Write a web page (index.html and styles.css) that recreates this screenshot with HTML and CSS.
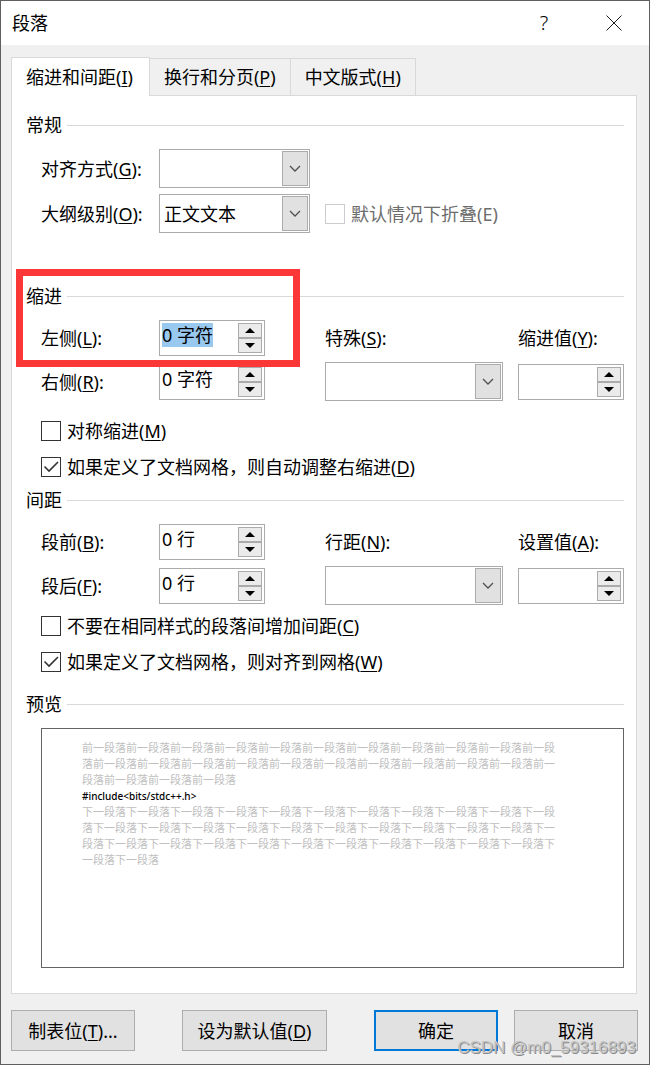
FILE: index.html
```html
<!DOCTYPE html>
<html lang="zh-CN">
<head>
    <meta charset="UTF-8">
    <meta name="viewport" content="width=device-width, initial-scale=1.0">
    <title>段落</title>
    <link rel="stylesheet" href="styles.css">
</head>
<body>
    <svg class="defs" width="0" height="0">
        <symbol id="chevron" viewBox="0 0 12 8"><path d="M1 1l5 5 5-5" fill="none" stroke="#505050" stroke-width="1.3"/></symbol>
        <symbol id="up" viewBox="0 0 10 5"><path d="M5 0l5 5H0z"/></symbol>
        <symbol id="down" viewBox="0 0 10 5"><path d="M0 0h10L5 5z"/></symbol>
        <symbol id="check" viewBox="0 0 20 20"><path d="M3.5 9.5l4.5 4.5L17 5" fill="none" stroke="#333" stroke-width="1.6"/></symbol>
    </svg>

    <div class="dialog">
        <header class="titlebar">
            <h1>段落</h1>
            <button type="button" class="title-btn help" aria-label="帮助">?</button>
            <button type="button" class="title-btn" aria-label="关闭">
                <svg width="16" height="16" viewBox="0 0 16 16"><path d="M.5.5l15 15M15.5.5l-15 15" fill="none" stroke="#000" stroke-width=".9"/></svg>
            </button>
        </header>

        <nav class="tabs">
            <button type="button" class="tab active">缩进和间距(<u>I</u>)</button>
            <button type="button" class="tab">换行和分页(<u>P</u>)</button>
            <button type="button" class="tab">中文版式(<u>H</u>)</button>
        </nav>

        <main class="pane">
            <section class="general">
                <h2>常规</h2>
                <div class="fields">
                    <label for="align">对齐方式(<u>G</u>):</label>
                    <div class="combo">
                        <select id="align"><option></option></select>
                        <span class="combo-arrow"><svg width="12" height="8"><use href="#chevron"/></svg></span>
                    </div>
                    <label for="outline" class="new-row">大纲级别(<u>O</u>):</label>
                    <div class="combo">
                        <select id="outline"><option>正文文本</option></select>
                        <span class="combo-arrow"><svg width="12" height="8"><use href="#chevron"/></svg></span>
                    </div>
                    <label class="check disabled">
                        <span class="box"><input type="checkbox" disabled></span>
                        <span>默认情况下折叠(E)</span>
                    </label>
                </div>
            </section>

            <section class="indent">
                <h2>缩进</h2>
                <div class="fields">
                    <label for="left">左侧(<u>L</u>):</label>
                    <div class="spin">
                        <input type="text" id="left" value="0 字符">
                        <div class="spin-btns">
                            <button type="button" aria-label="增加"><svg width="10" height="5"><use href="#up"/></svg></button>
                            <button type="button" aria-label="减少"><svg width="10" height="5"><use href="#down"/></svg></button>
                        </div>
                    </div>
                    <label for="special">特殊(<u>S</u>):</label>
                    <label for="by">缩进值(<u>Y</u>):</label>

                    <label for="right">右侧(<u>R</u>):</label>
                    <div class="spin">
                        <input type="text" id="right" value="0 字符">
                        <div class="spin-btns">
                            <button type="button" aria-label="增加"><svg width="10" height="5"><use href="#up"/></svg></button>
                            <button type="button" aria-label="减少"><svg width="10" height="5"><use href="#down"/></svg></button>
                        </div>
                    </div>
                    <div class="combo wide">
                        <select id="special"><option></option></select>
                        <span class="combo-arrow"><svg width="12" height="8"><use href="#chevron"/></svg></span>
                    </div>
                    <div class="spin">
                        <input type="text" id="by">
                        <div class="spin-btns">
                            <button type="button" aria-label="增加"><svg width="10" height="5"><use href="#up"/></svg></button>
                            <button type="button" aria-label="减少"><svg width="10" height="5"><use href="#down"/></svg></button>
                        </div>
                    </div>
                </div>
                <div class="checks">
                    <label class="check">
                        <span class="box"><input type="checkbox"><svg><use href="#check"/></svg></span>
                        <span>对称缩进(<u>M</u>)</span>
                    </label>
                    <label class="check">
                        <span class="box"><input type="checkbox" checked><svg><use href="#check"/></svg></span>
                        <span>如果定义了文档网格，则自动调整右缩进(<u>D</u>)</span>
                    </label>
                </div>
                <div class="highlight"></div>
            </section>

            <section class="spacing">
                <h2>间距</h2>
                <div class="fields">
                    <label for="before">段前(<u>B</u>):</label>
                    <div class="spin">
                        <input type="text" id="before" value="0 行">
                        <div class="spin-btns">
                            <button type="button" aria-label="增加"><svg width="10" height="5"><use href="#up"/></svg></button>
                            <button type="button" aria-label="减少"><svg width="10" height="5"><use href="#down"/></svg></button>
                        </div>
                    </div>
                    <label for="line">行距(<u>N</u>):</label>
                    <label for="at">设置值(<u>A</u>):</label>

                    <label for="after">段后(<u>F</u>):</label>
                    <div class="spin">
                        <input type="text" id="after" value="0 行">
                        <div class="spin-btns">
                            <button type="button" aria-label="增加"><svg width="10" height="5"><use href="#up"/></svg></button>
                            <button type="button" aria-label="减少"><svg width="10" height="5"><use href="#down"/></svg></button>
                        </div>
                    </div>
                    <div class="combo wide">
                        <select id="line"><option></option></select>
                        <span class="combo-arrow"><svg width="12" height="8"><use href="#chevron"/></svg></span>
                    </div>
                    <div class="spin">
                        <input type="text" id="at">
                        <div class="spin-btns">
                            <button type="button" aria-label="增加"><svg width="10" height="5"><use href="#up"/></svg></button>
                            <button type="button" aria-label="减少"><svg width="10" height="5"><use href="#down"/></svg></button>
                        </div>
                    </div>
                </div>
                <div class="checks tight">
                    <label class="check">
                        <span class="box"><input type="checkbox"><svg><use href="#check"/></svg></span>
                        <span>不要在相同样式的段落间增加间距(<u>C</u>)</span>
                    </label>
                    <label class="check">
                        <span class="box"><input type="checkbox" checked><svg><use href="#check"/></svg></span>
                        <span>如果定义了文档网格，则对齐到网格(<u>W</u>)</span>
                    </label>
                </div>
            </section>

            <section>
                <h2>预览</h2>
                <div class="preview">
                    <p>前一段落前一段落前一段落前一段落前一段落前一段落前一段落前一段落前一段落前一段落前一段落前一段落前一段落前一段落前一段落前一段落前一段落前一段落前一段落前一段落前一段落前一段落前一段落前一段落前一段落</p>
                    <p class="current">#include&lt;bits/stdc++.h&gt;</p>
                    <p>下一段落下一段落下一段落下一段落下一段落下一段落下一段落下一段落下一段落下一段落下一段落下一段落下一段落下一段落下一段落下一段落下一段落下一段落下一段落下一段落下一段落下一段落下一段落下一段落下一段落下一段落下一段落下一段落下一段落下一段落下一段落下一段落下一段落下一段落</p>
                </div>
            </section>
        </main>

        <footer class="actions">
            <button type="button">制表位(<u>T</u>)...</button>
            <button type="button" class="default-btn">设为默认值(<u>D</u>)</button>
            <div class="confirm">
                <button type="button" class="primary">确定</button>
                <button type="button">取消</button>
            </div>
        </footer>
        <span class="watermark">CSDN @m0_59316893</span>
    </div>

    <script>
        const left = document.getElementById("left");
        left.focus();
        left.select();
    </script>
</body>
</html>
```
FILE: styles.css
```css
* {
    box-sizing: border-box;
}
body {
    margin: 0;
    font-family: "Noto Sans", "Noto Sans CJK SC", sans-serif;
    font-size: 18px;
    line-height: 24px;
    color: #000;
}
button, input, select {
    font: inherit;
    color: inherit;
    margin: 0;
    padding: 0;
    border-radius: 0;
}
u {
    text-underline-offset: 2px;
    text-decoration-thickness: 1px;
}
.defs {
    position: absolute;
}
.dialog {
    position: relative;
    background-color: #f0f0f0;
    border: 1px solid #5f5f5f;
    padding-bottom: 13px;
}

/* title bar */
.titlebar {
    display: flex;
    align-items: center;
    height: 44px;
    padding-left: 11px;
    background-color: #fff;
}
.titlebar h1 {
    flex: 1;
    margin: 0;
    font-size: 18px;
    font-weight: inherit;
}
.title-btn {
    display: flex;
    align-items: center;
    justify-content: center;
    width: 70px;
    height: 44px;
    border: none;
    background: none;
}
.title-btn.help {
    font-size: 20px;
    font-weight: 300;
}

/* tabs */
.tabs {
    display: flex;
    align-items: flex-end;
    margin: 12px 12px 0 10px;
}
.tab {
    height: 37px;
    padding: 0 14px;
    margin-left: -1px;
    border: 1px solid #d9d9d9;
    border-bottom: none;
    background-color: #f0f0f0;
}
.tab.active {
    position: relative;
    z-index: 1;
    height: 39px;
    margin: 0 0 -1px;
    padding: 0 16px 0 14px;
    background-color: #fff;
}
.pane {
    margin: 0 12px 0 10px;
    padding: 17px 12px 25px 14px;
    border: 1px solid #d9d9d9;
    background-color: #fff;
}

/* groups */
h2 {
    display: flex;
    align-items: center;
    gap: 5px;
    margin: 0 0 12px;
    font-size: 18px;
    font-weight: inherit;
}
h2::after {
    content: "";
    flex: 1;
    height: 1px;
    background-color: #d9d9d9;
}
.general {
    margin-bottom: 51px;
}
.indent {
    position: relative;
    margin-bottom: 3px;
}
.spacing {
    margin-bottom: 12px;
}
.fields {
    display: grid;
    grid-template-columns: 118px 166px 1fr 106px;
    align-items: center;
    row-gap: 6px;
    margin-left: 15px;
}
.new-row {
    grid-column: 1;
}

.combo {
    position: relative;
    width: 151px;
    height: 39px;
}
.combo.wide {
    width: auto;
    margin-right: 15px;
}
.combo select {
    appearance: none;
    width: 100%;
    height: 100%;
    padding-left: 4px;
    border: 1px solid #ababab;
    background-color: #fff;
}
.combo-arrow {
    position: absolute;
    top: 2px;
    right: 2px;
    bottom: 2px;
    width: 26px;
    display: flex;
    align-items: center;
    justify-content: center;
    border: 1px solid #ababab;
    background-color: #e1e1e1;
    pointer-events: none;
}

.spin {
    display: flex;
    justify-content: space-between;
    width: 106px;
    height: 36px;
    padding: 2px;
    border: 1px solid #ababab;
    background-color: #fff;
}
.spin input {
    width: 72px;
    height: 24px;
    border: none;
    outline: none;
    background: none;
}
.spin input::selection {
    background-color: #99c9ef;
    color: #000;
}
.spin-btns {
    display: flex;
    flex-direction: column;
    width: 24px;
}
.spin-btns button {
    flex: 1;
    display: flex;
    align-items: center;
    justify-content: center;
    border: 1px solid #ababab;
    background-color: #ebebeb;
}

/* tick boxes */
.checks {
    margin: 12px 0 0 15px;
}
.checks.tight {
    margin-top: 3px;
}
.check {
    display: flex;
    align-items: center;
    gap: 6px;
    height: 36px;
}
.box {
    position: relative;
    width: 20px;
    height: 20px;
}
.box input {
    appearance: none;
    display: block;
    width: 20px;
    height: 20px;
    border: 1px solid #333;
    background-color: #fff;
}
.box svg {
    display: none;
    position: absolute;
    inset: 0;
    width: 20px;
    height: 20px;
}
.box input:checked + svg {
    display: block;
}
.disabled {
    grid-column: 3 / 5;
    color: #6d6d6d;
}
.disabled input {
    border-color: #ccc;
}

/* red marker round the left indent */
.highlight {
    position: absolute;
    top: -15px;
    left: -10px;
    width: 284px;
    height: 98px;
    border: 7px solid #fb3737;
    pointer-events: none;
}

.preview {
    height: 240px;
    margin-left: 15px;
    padding: 11px 40px;
    border: 1px solid #646464;
    font-size: 11px;
    line-height: 16px;
    color: #c0c0c0;
    overflow: hidden;
}
.preview p {
    max-width: 43em;
    margin: 0;
    word-break: break-all;
}
.preview .current {
    color: #000;
    font-size: 10px;
    font-weight: 500;
}

/* bottom buttons */
.actions {
    display: flex;
    margin: 16px 11px 0 10px;
}
.actions button {
    width: 124px;
    height: 41px;
    border: 1px solid #adadad;
    background-color: #e1e1e1;
}
.actions .default-btn {
    width: 145px;
    margin-left: 47px;
}
.actions .primary {
    border: 2px solid #0078d7;
}
.confirm {
    display: flex;
    gap: 16px;
    margin-left: auto;
}
.watermark {
    position: absolute;
    right: 13px;
    bottom: 4px;
    font-family: "Liberation Sans", sans-serif;
    font-size: 17px;
    color: #c4c4c4;
    text-shadow: 1px 1px 0 #8a8a8a;
    pointer-events: none;
}
```
